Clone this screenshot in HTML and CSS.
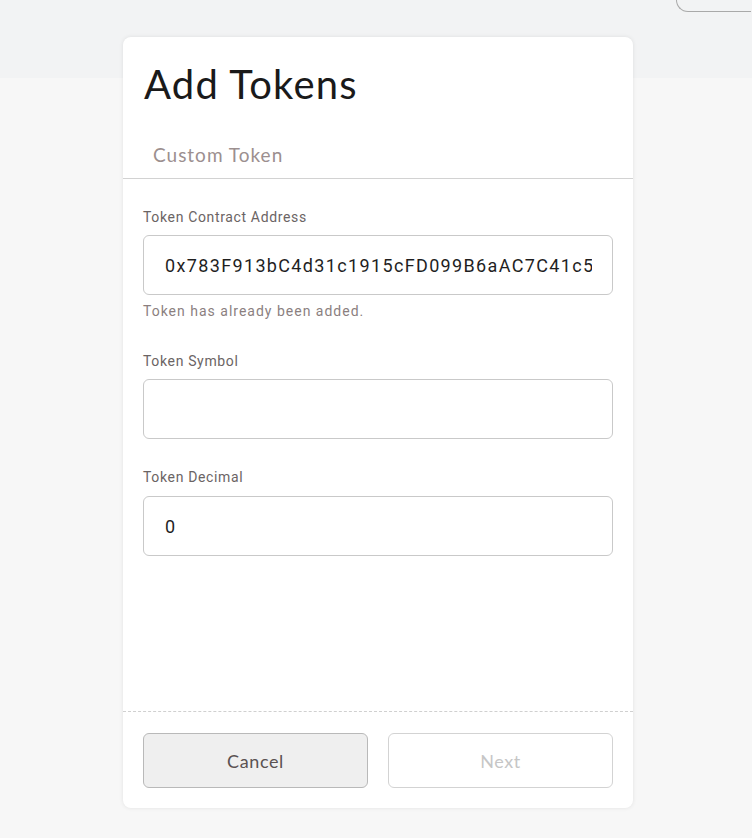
FILE: index.html
```html
<!DOCTYPE html>
<html lang="en">
<head>
<meta charset="utf-8">
<title>Add Tokens</title>
<link rel="stylesheet" href="styles.css">
</head>
<body>
<div class="app">
  <div class="header-band"><div class="account-chip"></div></div>
  <div class="card">
    <div class="card-head">
      <h1 class="title">Add Tokens</h1>
      <div class="tab">Custom Token</div>
    </div>
    <div class="card-body">
      <div class="field field-first">
        <label class="label">Token Contract Address</label>
        <input class="input address" type="text" value="0x783F913bC4d31c1915cFD099B6aAC7C41c5a0e6B">
        <div class="error">Token has already been added.</div>
      </div>
      <div class="field">
        <label class="label">Token Symbol</label>
        <input class="input" type="text" value="">
      </div>
      <div class="field">
        <label class="label label-last">Token Decimal</label>
        <input class="input" type="text" value="0">
      </div>
    </div>
    <div class="card-foot">
      <button class="btn btn-cancel">Cancel</button>
      <button class="btn btn-next">Next</button>
    </div>
  </div>
</div>
</body>
</html>
```
FILE: styles.css
```css
html, body {
  margin: 0;
  padding: 0;
}
body {
  background: #f7f7f7;
  width: 752px;
  height: 838px;
  overflow: hidden;
}
.app {
  position: relative;
  height: 838px;
  overflow: hidden;
}
.header-band {
  height: 78px;
  background: #f2f3f4;
  position: relative;
}
.account-chip {
  position: absolute;
  left: 676px;
  top: -30px;
  width: 74px;
  height: 40px;
  border: 1px solid #a9a9a9;
  border-right: none;
  border-radius: 12px 0 0 12px;
  background: #f2f3f4;
}
.card {
  position: relative;
  margin: -41px 0 0 123px;
  width: 510px;
  height: 771px;
  background: #ffffff;
  border-radius: 8px;
  box-shadow: 0 0 4px rgba(0, 0, 0, 0.09);
  display: flex;
  flex-direction: column;
}
.card-head {
  padding: 23px 0 0 0;
  border-bottom: 1px solid #d2d2d2;
}
.title {
  margin: 0 0 0 21px;
  font-family: Lato, "Open Sans", sans-serif;
  font-weight: 400;
  font-size: 40px;
  line-height: 48px;
  color: #1a1a1a;
  letter-spacing: 1.2px;
}
.tab {
  margin: 35px 0 0 30px;
  padding-bottom: 11px;
  font-family: Lato, "Open Sans", sans-serif;
  font-size: 19px;
  line-height: 24px;
  color: #9c8f8f;
  letter-spacing: 1px;
}
.card-body {
  flex: 1;
  padding: 30px 20px 0 20px;
  border-bottom: 1px dashed #d0d0d0;
}
.field {
  display: flex;
  flex-direction: column;
  margin-bottom: 30px;
}
.field-first {
  margin-bottom: 34px;
}
.label {
  font-family: Roboto, "Liberation Sans", sans-serif;
  font-size: 14px;
  line-height: 16px;
  color: #6b6464;
  margin-bottom: 10px;
  letter-spacing: 0.65px;
}
.label-last {
  margin-bottom: 11px;
}
.input {
  box-sizing: border-box;
  width: 470px;
  height: 60px;
  border: 1px solid #c9c9c9;
  border-radius: 6px;
  padding: 0 20px 0 21px;
  font-family: Roboto, "Liberation Sans", sans-serif;
  font-size: 18px;
  color: #1f1f1f;
  background: #ffffff;
  outline: none;
}
.address {
  letter-spacing: 1.35px;
}
.error {
  margin-top: 8px;
  font-family: Roboto, "Liberation Sans", sans-serif;
  font-size: 14px;
  line-height: 16px;
  color: #8b7f7f;
  letter-spacing: 1px;
}
.card-foot {
  display: flex;
  gap: 20px;
  padding: 21px 20px 20px 20px;
}
.btn {
  flex: 1;
  height: 55px;
  border-radius: 6px;
  font-family: Lato, "Open Sans", sans-serif;
  font-size: 18px;
  background: #ffffff;
  cursor: pointer;
  letter-spacing: 0.6px;
}
.btn-cancel {
  background: #efefef;
  border: 1px solid #b9b9b9;
  color: #5a5252;
}
.btn-next {
  border: 1px solid #d3d3d3;
  color: #c6c6c6;
}
```
